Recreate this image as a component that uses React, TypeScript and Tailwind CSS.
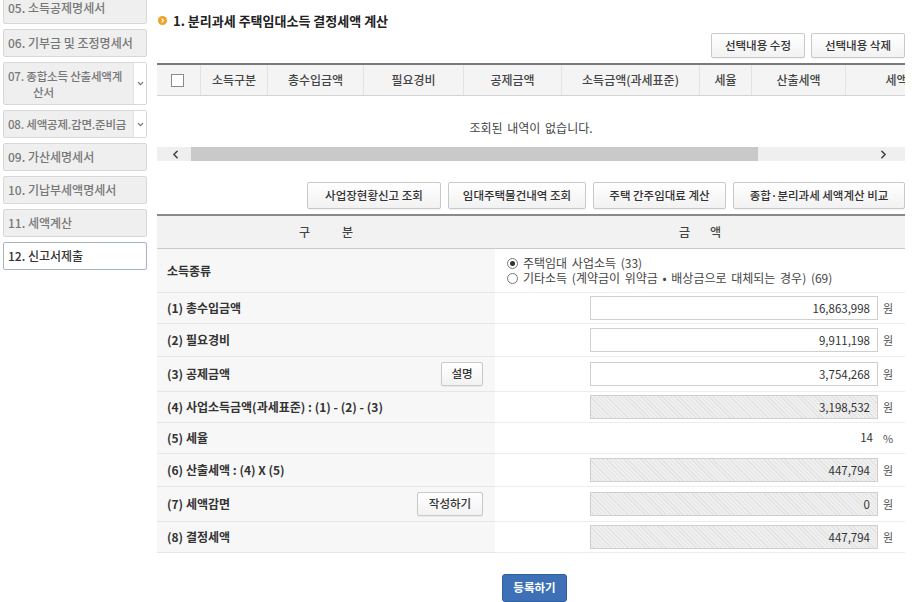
import React from 'react';
import { ChevronDown, ChevronLeft, ChevronRight } from 'lucide-react';

const hatch =
  'bg-[repeating-linear-gradient(45deg,#efefef_0px,#efefef_2px,#e3e3e3_2px,#e3e3e3_3px)]';

function SideItem({ label, active, first }: { label: string; active?: boolean; first?: boolean }) {
  return (
    <div
      className={`flex h-[28px] shrink-0 items-center rounded-[2px] border px-[4px] text-[12px] font-medium leading-[14px] ${
        active ? 'border-[#a9b4c4] bg-white text-[#333]' : 'border-[#d8d8d8] bg-[#efefef] text-[#777]'
      } ${first ? 'pb-[5px]' : ''}`}
    >
      {label}
    </div>
  );
}

function SideDrop({ lines, tall }: { lines: string[]; tall?: boolean }) {
  return (
    <div
      className={`flex shrink-0 rounded-[2px] border border-[#d8d8d8] bg-[#efefef] text-[11.5px] font-medium leading-[16px] text-[#777] ${
        tall ? 'h-[43px]' : 'h-[28px]'
      }`}
    >
      <div className="flex min-w-0 flex-1 flex-col justify-center whitespace-nowrap pl-[4px] tracking-[-0.2px]">
        <span>{lines[0]}</span>
        {lines[1] && <span className="pl-[25px]">{lines[1]}</span>}
      </div>
      <div className="flex w-[13px] shrink-0 items-center justify-center border-l border-[#e2e2e2] bg-white">
        <ChevronDown size={9} strokeWidth={3} className="text-[#666]" />
      </div>
    </div>
  );
}

function Btn({ children, w }: { children: React.ReactNode; w: string }) {
  return (
    <button
      className={`flex h-full items-center justify-center rounded-[2px] border border-[#c9c9c9] bg-gradient-to-b from-white to-[#f2f2f2] text-[11.5px] font-medium text-[#333] shadow-[0_1px_1px_rgba(0,0,0,0.06)] ${w}`}
    >
      {children}
    </button>
  );
}

const cols: [string, string][] = [
  ['', 'w-[44px]'],
  ['소득구분', 'w-[67px]'],
  ['총수입금액', 'w-[96px]'],
  ['필요경비', 'w-[100px]'],
  ['공제금액', 'w-[98px]'],
  ['소득금액(과세표준)', 'w-[138px]'],
  ['세율', 'w-[52px]'],
  ['산출세액', 'w-[94px]'],
  ['세액감면', 'w-[124px]'],
];

function Amount({ value, locked, unit = '원' }: { value: string; locked?: boolean; unit?: string }) {
  return (
    <>
      <input
        readOnly
        value={value}
        className={`h-[24px] w-[288px] border border-[#cfcfcf] pr-[7px] text-right text-[11.5px] text-[#333] outline-none ${
          locked ? hatch : 'bg-white'
        }`}
      />
      <span className="w-[10px] text-[11px] text-[#555]">{unit}</span>
    </>
  );
}

type Row = {
  label: string;
  h: string;
  btn?: { text: string; w: string };
  right: React.ReactNode;
};

const rows: Row[] = [
  { label: '(1) 총수입금액', h: 'h-[31px]', right: <Amount value="16,863,998" /> },
  { label: '(2) 필요경비', h: 'h-[33px]', right: <Amount value="9,911,198" /> },
  { label: '(3) 공제금액', h: 'h-[35px]', btn: { text: '설명', w: 'w-[42px]' }, right: <Amount value="3,754,268" /> },
  { label: '(4) 사업소득금액(과세표준) : (1) - (2) - (3)', h: 'h-[31px]', right: <Amount value="3,198,532" locked /> },
  {
    label: '(5) 세율',
    h: 'h-[31px]',
    right: (
      <>
        <span className="w-[288px] pr-[5px] text-right text-[11.5px] text-[#333]">14</span>
        <span className="w-[10px] text-[11px] text-[#555]">%</span>
      </>
    ),
  },
  { label: '(6) 산출세액 : (4) X (5)', h: 'h-[33px]', right: <Amount value="447,794" locked /> },
  { label: '(7) 세액감면', h: 'h-[35px]', btn: { text: '작성하기', w: 'w-[66px]' }, right: <Amount value="0" locked /> },
  { label: '(8) 결정세액', h: 'h-[31px]', right: <Amount value="447,794" locked /> },
];

export default function App() {
  return (
    <div className="flex h-[602px] w-[915px] overflow-hidden bg-white font-['Noto_Sans_CJK_KR','Noto_Sans',sans-serif] text-[#333]">
      {/* left step menu */}
      <aside className="ml-[3px] mt-[-4px] flex w-[144px] shrink-0 flex-col gap-[5px]">
        <SideItem label="05. 소득공제명세서" first />
        <SideItem label="06. 기부금 및 조정명세서" />
        <SideDrop lines={['07. 종합소득 산출세액계', '산서']} tall />
        <SideDrop lines={['08. 세액공제.감면.준비금']} />
        <SideItem label="09. 가산세명세서" />
        <SideItem label="10. 기납부세액명세서" />
        <SideItem label="11. 세액계산" />
        <SideItem label="12. 신고서제출" active />
      </aside>

      <main className="ml-[10px] flex w-[748px] shrink-0 flex-col pt-[12px]">
        {/* title */}
        <div className="ml-[1px] flex h-[17px] items-center gap-[6px]">
          <svg width="9" height="9" viewBox="0 0 9 9">
            <circle cx="4.5" cy="4.5" r="4.5" fill="#f0a127" />
            <path d="M3.6 2.6 L5.5 4.5 L3.6 6.4" stroke="#fff" strokeWidth="1.3" fill="none" />
          </svg>
          <h2 className="text-[13px] font-bold leading-[17px] text-[#222]">1. 분리과세 주택임대소득 결정세액 계산</h2>
        </div>

        <div className="mt-[4px] flex h-[25px] justify-end gap-[6px]">
          <Btn w="w-[94px]">선택내용 수정</Btn>
          <Btn w="w-[94px]">선택내용 삭제</Btn>
        </div>

        {/* list table */}
        <div className="mt-[5px] overflow-hidden border-t-2 border-[#7a7a7a]">
          <div className="flex h-[31px] w-max border-b border-[#d2d2d2] bg-[#f4f4f4]">
            {cols.map(([t, w], i) => (
              <div
                key={i}
                className={`flex shrink-0 items-center justify-center border-r border-[#e3e3e3] text-[12px] font-medium text-[#444] ${w}`}
              >
                {i === 0 ? (
                  <span className="ml-[-2px] h-[13px] w-[13px] border border-[#8a8a8a] bg-white" />
                ) : (
                  t
                )}
              </div>
            ))}
          </div>
          <div className="h-[51px] pt-[25px] text-center text-[12px] leading-[14px] text-[#444] [word-spacing:2px]">
            조회된 내역이 없습니다.
          </div>
          <div className="flex h-[14px] bg-[#efefef]">
            <div className="flex w-[34px] items-center justify-end pr-[9px] text-[#444]">
              <ChevronLeft size={13} strokeWidth={3} />
            </div>
            <div className="w-[567px] bg-[#c9c9c9]" />
            <div className="flex-1" />
            <div className="flex w-[34px] items-center justify-start pl-[6px] text-[#444]">
              <ChevronRight size={13} strokeWidth={3} />
            </div>
          </div>
        </div>

        <div className="mt-[21px] flex h-[27px] justify-end gap-[7px]">
          <Btn w="w-[134px]">사업장현황신고 조회</Btn>
          <Btn w="w-[138px]">임대주택물건내역 조회</Btn>
          <Btn w="w-[133px]">주택 간주임대료 계산</Btn>
          <Btn w="w-[172px]">종합·분리과세 세액계산 비교</Btn>
        </div>

        {/* calc form */}
        <div className="mt-[5px] border-t-2 border-[#8a8a8a]">
          <div className="grid h-[33px] grid-cols-[338px_410px] border-b border-[#c9c9c9] bg-[#f2f2f2] text-[12px] font-medium text-[#444]">
            <div className="flex items-center justify-center gap-[32px]">
              <span>구</span>
              <span>분</span>
            </div>
            <div className="flex items-center justify-center gap-[20px]">
              <span>금</span>
              <span>액</span>
            </div>
          </div>

          <div className="grid h-[44px] grid-cols-[338px_410px]">
            <div className="flex items-center border-b border-[#e6e6e6] bg-[#f7f7f7] px-[10px] text-[12px] font-semibold text-[#333]">
              소득종류
            </div>
            <div className="flex flex-col justify-center gap-px border-b border-[#ededed] pl-[12px] text-[12px] leading-[14px] text-[#444] [word-spacing:2px]">
              <label className="flex items-center gap-[5px]">
                <span className="flex h-[11px] w-[11px] items-center justify-center rounded-full border border-[#777] bg-white">
                  <span className="h-[5px] w-[5px] rounded-full bg-[#333]" />
                </span>
                주택임대 사업소득 (33)
              </label>
              <label className="flex items-center gap-[5px]">
                <span className="h-[11px] w-[11px] rounded-full border border-[#777] bg-white" />
                기타소득 (계약금이 위약금 • 배상금으로 대체되는 경우) (69)
              </label>
            </div>
          </div>

          {rows.map((r) => (
            <div key={r.label} className={`grid grid-cols-[338px_410px] ${r.h}`}>
              <div className="flex items-center justify-between border-b border-[#e6e6e6] bg-[#f7f7f7] pl-[10px] pr-[12px] text-[12px] font-semibold text-[#333]">
                <span>{r.label}</span>
                {r.btn && (
                  <button
                    className={`flex h-[24px] items-center justify-center rounded-[2px] border border-[#c9c9c9] bg-gradient-to-b from-white to-[#f2f2f2] text-[11.5px] font-medium text-[#333] shadow-[0_1px_1px_rgba(0,0,0,0.06)] ${r.btn.w}`}
                  >
                    {r.btn.text}
                  </button>
                )}
              </div>
              <div className="flex items-center justify-end gap-[5px] border-b border-[#ededed] pr-[12px]">{r.right}</div>
            </div>
          ))}
        </div>

        <div className="mt-[21px] flex justify-center pl-[7px]">
          <button className="h-[28px] w-[65px] rounded-[3px] border border-[#2f5f9f] bg-[#3d70b7] text-[11.5px] font-bold text-white">
            등록하기
          </button>
        </div>
      </main>
    </div>
  );
}
